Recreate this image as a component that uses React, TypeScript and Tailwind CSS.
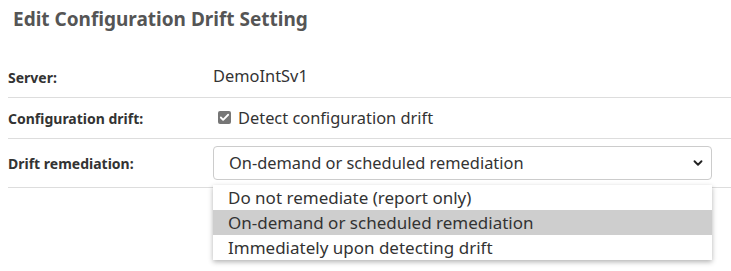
import { Check, ChevronDown } from "lucide-react";

const font = { fontFamily: '"Noto Sans", "Open Sans", Arial, sans-serif' };

const options = [
  "Do not remediate (report only)",
  "On-demand or scheduled remediation",
  "Immediately upon detecting drift",
];

function Row({ label, children, className = "" }: { label: string; children: React.ReactNode; className?: string }) {
  return (
    <div className={"flex items-center border-b border-[#dddddd] " + className}>
      <div className="w-[205px] shrink-0 text-[14px] font-bold text-[#333333]">{label}</div>
      <div className="flex flex-1 items-center text-[16.4px] text-[#333333]">{children}</div>
    </div>
  );
}

export default function App() {
  const selected = 1;
  return (
    <div className="h-[271px] w-[731px] bg-white pl-2" style={font}>
      <h2 className="pt-[6px] pl-[5px] text-[19px] font-bold leading-[26px] text-[#555555]">
        Edit Configuration Drift Setting
      </h2>
      <div className="mt-[26px]">
        <Row label="Server:" className="h-[40px]">
          <span className="-mt-[2px]">DemoIntSv1</span>
        </Row>
        <Row label="Configuration drift:" className="h-[41px]">
          <span className="ml-[5px] mr-[7px] flex h-[13px] w-[13px] items-center justify-center rounded-[2px] bg-[#767676]">
            <Check className="h-[11px] w-[11px] text-white" strokeWidth={4} />
          </span>
          <span>Detect configuration drift</span>
        </Row>
        <Row label="Drift remediation:" className="h-[49px]">
          <div className="relative mr-[19px] w-full">
            <div className="flex h-[34px] items-center justify-between rounded-[4px] border border-[#cccccc] pl-[15px] pr-[6px]">
              <span>{options[selected]}</span>
              <ChevronDown className="h-[14px] w-[14px] text-[#222222]" strokeWidth={3.2} />
            </div>
            <div className="absolute left-0 right-0 top-[39px] z-10 bg-white text-[17px] shadow-[0_2px_5px_rgba(0,0,0,0.3)]">
              {options.map((o, i) => (
                <div
                  key={o}
                  className={"flex h-[25px] items-center pl-[15px] " + (i === selected ? "bg-[#cecece]" : "")}
                >
                  {o}
                </div>
              ))}
            </div>
          </div>
        </Row>
      </div>
    </div>
  );
}
